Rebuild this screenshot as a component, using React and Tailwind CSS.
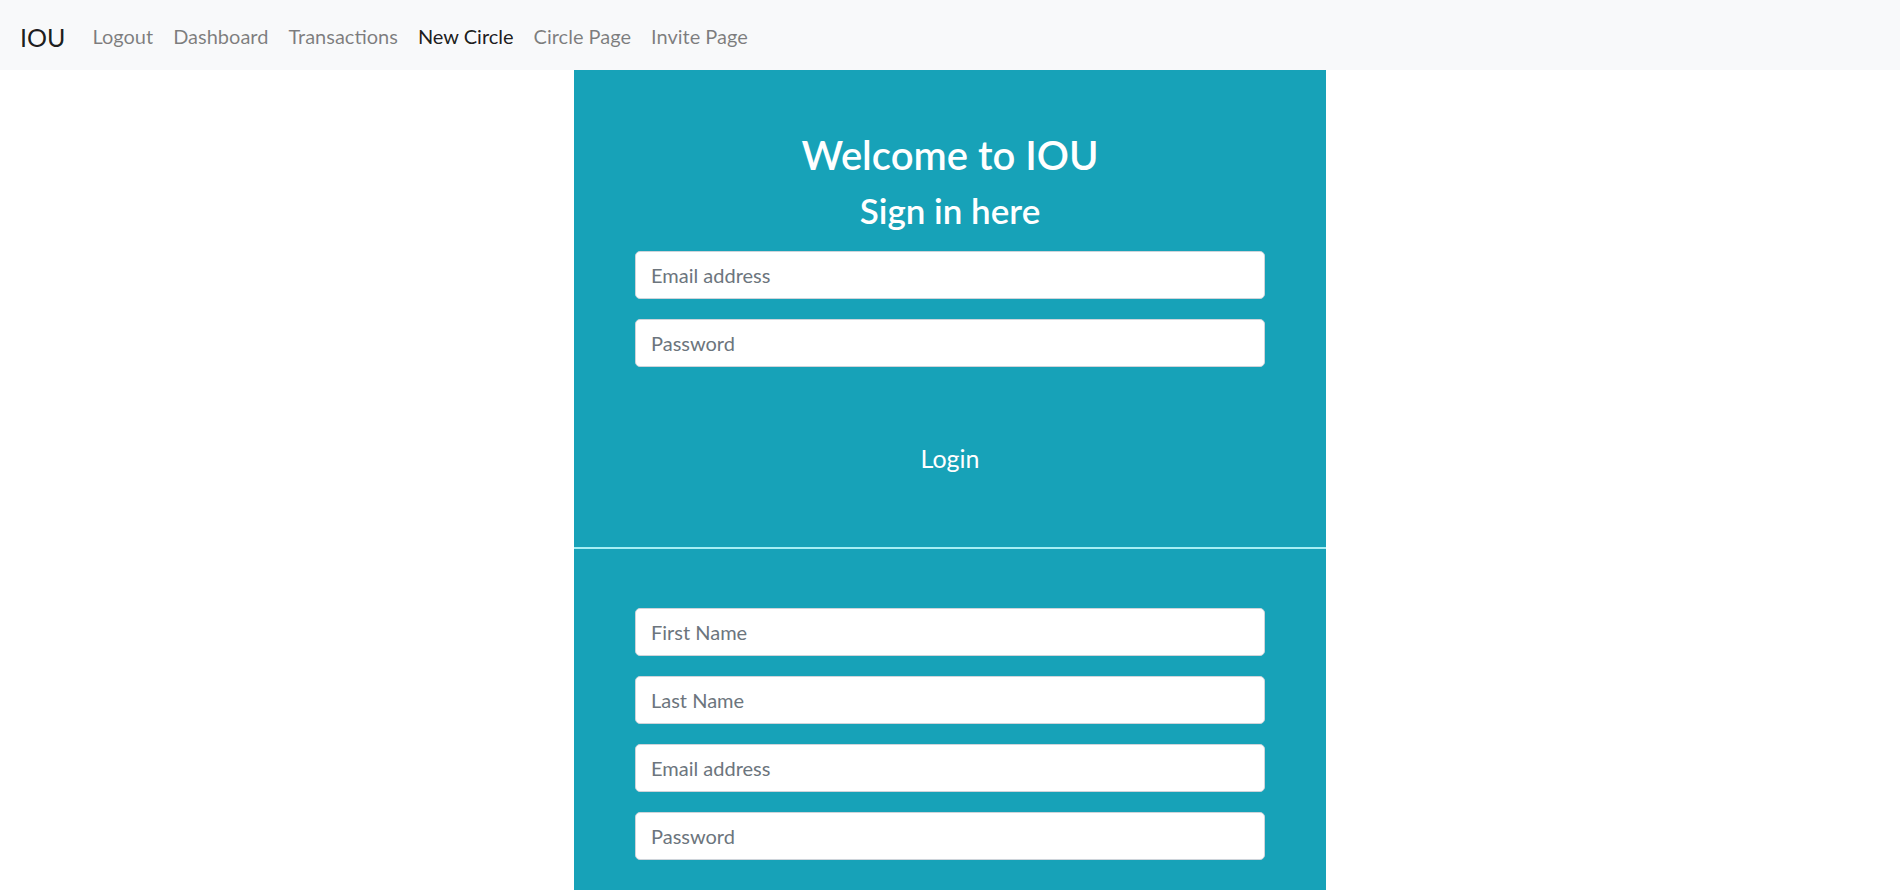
import React from "react";

const font = { fontFamily: "Lato, 'Liberation Sans', sans-serif" };

const links = ["Logout", "Dashboard", "Transactions", "New Circle", "Circle Page", "Invite Page"];

const Field = ({ placeholder, type = "text" }) => (
  <input
    type={type}
    placeholder={placeholder}
    className="block w-full h-[48px] px-[15px] rounded-[5px] border border-[#ced4da] bg-white text-[20px] text-[#495057] placeholder:text-[#6c757d] outline-none"
  />
);

const App = () => {
  return (
    <div className="min-h-screen bg-white" style={font}>
      {/* navbar */}
      <nav className="h-[70px] bg-[#f8f9fa] flex items-center px-[20px] pt-[2px]">
        <a href="#" className="text-[25px] text-black/90 mr-[17px] leading-none pt-[2px]">
          IOU
        </a>
        <ul className="flex items-center">
          {links.map((l) => (
            <li key={l}>
              <a
                href="#"
                className={
                  "block px-[10px] text-[20px] " +
                  (l === "New Circle" ? "text-black/90" : "text-black/50")
                }
              >
                {l}
              </a>
            </li>
          ))}
        </ul>
      </nav>

      <div className="w-[752px] mx-auto bg-[#17a2b8] text-white">
        {/* sign in */}
        <div className="px-[61px] pt-[61px]">
          <h2 className="text-[40px] leading-[48px] font-semibold text-center mb-[10px]">Welcome to IOU</h2>
          <h3 className="text-[35px] leading-[42px] font-semibold text-center mb-[20px]">Sign in here</h3>
          <form className="flex flex-col gap-[20px]">
            <Field placeholder="Email address" type="email" />
            <Field placeholder="Password" type="password" />
          </form>
          <div className="pt-[73px] pb-[70px] flex justify-center">
            <button className="text-[25px] leading-[37px] text-white">Login</button>
          </div>
        </div>

        <div className="h-[2px] bg-[#a6eef4]" />

        {/* sign up */}
        <div className="px-[61px] pt-[59px] pb-[40px]">
          <form className="flex flex-col gap-[20px]">
            <Field placeholder="First Name" />
            <Field placeholder="Last Name" />
            <Field placeholder="Email address" type="email" />
            <Field placeholder="Password" type="password" />
          </form>
        </div>
      </div>
    </div>
  );
};

export default App;
